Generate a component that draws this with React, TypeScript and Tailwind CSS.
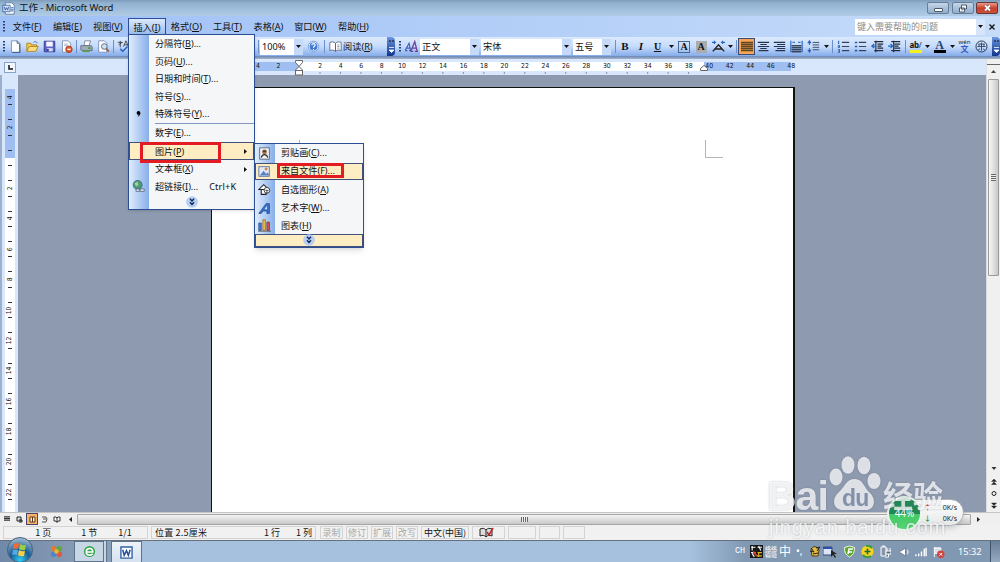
import type { ReactNode } from 'react';

interface MenuEntry {
  label: string;
  hotkey: string;
  tail?: string;
}

const MENUS: MenuEntry[] = [
  { label: '文件', hotkey: 'F' },
  { label: '编辑', hotkey: 'E' },
  { label: '视图', hotkey: 'V' },
  { label: '插入', hotkey: 'I' },
  { label: '格式', hotkey: 'O' },
  { label: '工具', hotkey: 'T' },
  { label: '表格', hotkey: 'A' },
  { label: '窗口', hotkey: 'W' },
  { label: '帮助', hotkey: 'H' },
];

const H_TICKS = Array.from({ length: 19 }, (_, i) => (i + 1) * 2);
const V_TICKS = ['4', '2', '', '2', '4', '6', '8', '10', '12', '14', '16', '18', '20', '22'];

function Label({ label, hotkey, tail = '' }: MenuEntry) {
  return (
    <span className="whitespace-nowrap">
      {label}(<span className="underline underline-offset-1">{hotkey}</span>){tail}
    </span>
  );
}

function Icon({ children, className = '' }: { children: ReactNode; className?: string }) {
  return (
    <svg viewBox="0 0 16 16" className={`h-[13px] w-[13px] shrink-0 ${className}`} fill="none">
      {children}
    </svg>
  );
}

function Tool({ children, w = 'w-[17px]' }: { children?: ReactNode; w?: string }) {
  return <div className={`flex h-full shrink-0 items-center justify-center ${w}`}>{children}</div>;
}

function Arrow({ w = 'w-2' }: { w?: string }) {
  return (
    <Tool w={w}>
      <svg viewBox="0 0 5 3" className="h-[3px] w-[5px]"><path d="M0 0h5L2.5 3z" fill="#111" /></svg>
    </Tool>
  );
}

function Sep({ w = 'w-[3px]' }: { w?: string }) {
  return (
    <Tool w={w}>
      <div className="h-[13px] w-px bg-[#6c8fcb]" />
    </Tool>
  );
}

function Handle({ w }: { w: string }) {
  return (
    <Tool w={w}>
      <svg viewBox="0 0 2 12" className="h-3 w-[2px]">
        <path d="M1 0v12" stroke="#27406f" strokeWidth="2" strokeDasharray="1.5 1.5" />
      </svg>
    </Tool>
  );
}

function Combo({ text, w }: { text: string; w: string }) {
  return (
    <div className={`mr-[2px] flex h-4 shrink-0 items-center bg-white ${w}`}>
      <span className="flex-1 whitespace-nowrap pl-[2px]">{text}</span>
      <div className="flex h-full w-[9px] items-center justify-center bg-[#c5daf8]">
        <Arrow />
      </div>
    </div>
  );
}

function EndCap() {
  return (
    <div className="flex h-[19px] w-2 shrink-0 flex-col items-center justify-between rounded-r-sm bg-linear-to-b from-[#6c96df] to-[#10358a] py-[3px]">
      <svg viewBox="0 0 5 2" className="h-[2px] w-[5px]"><path d="M0 1h2M3 1h2" stroke="#111" /></svg>
      <svg viewBox="0 0 5 6" className="h-[6px] w-[5px]"><path d="M0 .5h5M0 3h5L2.5 5.5z" stroke="#fff" fill="#fff" strokeWidth=".8" /></svg>
    </div>
  );
}

function TitleBar() {
  return (
    <div className="flex h-4 items-start bg-linear-to-b from-[#7f9cb9] via-[#91b2d1] via-20% to-[#b0cbe5]">
      <div className="flex h-[15px] w-[18px] items-center pl-[2px] pt-[1px]">
        <Icon className="h-[12px] w-[12px]">
          <path d="M4 1h8l3 3v11H4z" fill="#fff" stroke="#4d6ea5" />
          <path d="M1 4h9v8H1z" fill="#d6e4f8" stroke="#2f5ba6" />
          <path d="M3 6l1 4 1.5-3L7 10l1-4M11 7h3M11 9h3M11 11h3" stroke="#234a91" />
        </Icon>
      </div>
      <span className="flex-1 pl-[1px] text-[9.500px] leading-[15px] tracking-[-0.07px] text-[#0d1620]">工作 - Microsoft Word</span>
      <div className="mr-[2px] flex gap-[2.500px] pt-[2px]">
        <div className="flex h-[12px] w-[22px] items-center justify-center rounded-[2px] border border-[#667d98] bg-linear-to-b from-[#c5d6e7] to-[#91adca]">
          <div className="mt-[3px] h-[4px] w-[9px] rounded-[1px] border border-[#4a5a6d] bg-white" />
        </div>
        <div className="flex h-[12px] w-[22px] items-center justify-center rounded-[2px] border border-[#667d98] bg-linear-to-b from-[#c5d6e7] to-[#91adca]">
          <svg viewBox="0 0 10 9" className="h-[9px] w-[10px]"><path d="M3.5 1h5v4h-5zM1.500 4h5v4h-5z" fill="#fff" stroke="#4a5a6d" /><path d="M3.500 6h1" stroke="#4a5a6d" /></svg>
        </div>
        <div className="flex h-[12px] w-[22px] items-center justify-center rounded-[2px] border border-[#6d3436] bg-linear-to-b from-[#e59a8c] via-[#c9402c] to-[#c94f38]">
          <svg viewBox="0 0 9 8" className="h-[8px] w-[9px]"><path d="M2 1.500l5 5M7 1.500l-5 5" stroke="#7b3430" strokeWidth="3" /><path d="M2 1.500l5 5M7 1.500l-5 5" stroke="#fff" strokeWidth="1.800" /></svg>
        </div>
      </div>
    </div>
  );
}

function menuWidth(hotkey: string) {
  if (hotkey === 'I') {
    return 'mt-[2px] h-[19px] w-[38px] border border-b-0 border-[#2c4f93] bg-linear-to-b from-[#dbe8fc] to-[#8fb4ec]';
  }
  if (hotkey === 'W' || hotkey === 'H') {
    return 'h-full w-[43px]';
  }
  return 'OTA'.includes(hotkey) ? 'h-full w-[41px]' : 'h-full w-[40.300px]';
}

function MenuBar() {
  return (
    <div className="flex h-[21px] items-center bg-linear-to-r from-[#9fc0f6] to-[#c6dcf9] text-[9.200px] text-[#111]">
      <Handle w="w-[7px]" />
      {MENUS.map((menu) => (
        <div key={menu.hotkey} className={`flex shrink-0 items-center justify-center ${menuWidth(menu.hotkey)}`}>
          <Label {...menu} />
        </div>
      ))}
      <div className="flex-1" />
      <div className="mr-[2px] flex h-[16px] w-[130px] items-center bg-white">
        <span className="flex-1 pl-[2px] text-[9px] text-[#8b8b8b]">键入需要帮助的问题</span>
        <div className="h-full w-[9px] bg-[#d6e5fa]"><Arrow w="w-[9px]" /></div>
      </div>
      <svg viewBox="0 0 6 6" className="ml-[2px] mr-[5px] h-[6px] w-[6px]"><path d="M.5.5l5 5M5.500.5l-5 5" stroke="#111" strokeWidth="1.300" /></svg>
    </div>
  );
}

function StandardTools() {
  return (
    <>
      <Handle w="w-[7px]" />
      <Tool>
        <Icon><path d="M3 1h7l3 3v11H3z" fill="#fff" stroke="#6b86b5" /><path d="M10 1v3h3M13.500 5v10.500H4" stroke="#2c4877" /></Icon>
      </Tool>
      <Tool>
        <Icon><path d="M1 14V4h5l1 2h6v3" fill="#f6c84b" stroke="#a97a17" /><path d="M1 14l3-6h11l-3 6z" fill="#ffdf7c" stroke="#a97a17" /><path d="M9 3c2-2 4-1 5 1" stroke="#3c5d90" /></Icon>
      </Tool>
      <Tool>
        <Icon><path d="M1.500 1.500h13v13h-13z" fill="#5b62c9" stroke="#2b2f87" /><path d="M4 2h8v6H4z" fill="#f4f6ff" /><path d="M5 10h7v4H5z" fill="#d4d8f3" /><path d="M6 11v3" stroke="#2b2f87" strokeWidth="2" /></Icon>
      </Tool>
      <Tool>
        <Icon><path d="M3 1h7l3 3v11H3z" fill="#fff" stroke="#7588ab" /><path d="M5 5h5M5 7h5" stroke="#9aa8c4" /><circle cx="11" cy="11.500" r="4" fill="#e2582f" stroke="#a23a18" /><path d="M9 11.500h4" stroke="#fff" strokeWidth="1.600" /></Icon>
      </Tool>
      <Sep />
      <Tool>
        <Icon><path d="M5 7l1-6h7l-2 6z" fill="#fff" stroke="#6c7b8f" /><path d="M1 7h13l1 2v4H2l-1-1z" fill="#a3adb9" stroke="#566577" /><path d="M3 13h9v2H3z" fill="#5aa54a" /><path d="M10 10h3" stroke="#3da03a" strokeWidth="2" /></Icon>
      </Tool>
      <Tool>
        <Icon><path d="M2 1h7l3 3v11H2z" fill="#fff" stroke="#6b86b5" /><circle cx="9" cy="8" r="3.500" fill="#cfe0f3" stroke="#4b5a70" /><path d="M11.500 10.500l3 4" stroke="#a15e29" strokeWidth="2" /></Icon>
      </Tool>
      <Sep />
      <Tool>
        <Icon><path d="M1 3h6M4 1v2M2 6l4-3M4 4v5M8 8l3-7 3 7M9 6h4" stroke="#333" /><path d="M4 11l3 3 6-6" stroke="#2e69c8" strokeWidth="2" /></Icon>
      </Tool>
      <div className="w-[124px] shrink-0" />
      <Sep w="w-[4px]" />
      <Combo text="100%" w="w-[43px]" />
      <Tool>
        <Icon>
          <circle cx="8" cy="8" r="6.500" fill="#e4efff" stroke="#6993d6" />
          <circle cx="8" cy="8" r="4.800" fill="#3f79d0" />
          <path d="M6 6.500c0-3 4.500-2.500 4 0C9.500 8 8 7.500 8 9.500M8 11v1.300" stroke="#fff" strokeWidth="1.400" />
        </Icon>
      </Tool>
      <Sep w="w-[5px]" />
      <Tool w="w-[16px]">
        <Icon className="h-[11px] w-[11px]"><path d="M8 4C6 2 3 2 1 3v10c2-1 5-1 7 1zM8 4c2-2 5-2 7-1v10c-2-1-5-1-7 1z" fill="#fff" stroke="#53617a" /><path d="M10 6h3M10 8h3M10 10h3" stroke="#8994a7" /></Icon>
      </Tool>
      <div className="w-[44px] shrink-0"><Label label="阅读" hotkey="R" /></div>
      <EndCap />
    </>
  );
}

function Lines({ d }: { d: string }) {
  return <Icon><path d={d} stroke="#26334d" strokeWidth="1.400" /></Icon>;
}

function FormatTools() {
  return (
    <>
      <Handle w="ml-[2px] w-[6px]" />
      <Tool w="w-[17px]">
        <Icon><path d="M0 13l5-9 2 9M2 10h5M0 13h3M5 13h3" stroke="#3b5fae" strokeWidth="1.400" /><path d="M7 14l5-12 3 12M9 10h5M7 14h3M12 14h4" stroke="#71409c" strokeWidth="1.600" /></Icon>
      </Tool>
      <Combo text="正文" w="w-[59px]" />
      <Combo text="宋体" w="w-[90px]" />
      <Combo text="五号" w="w-[38px]" />
      <Sep w="w-[4px]" />
      <Tool w="w-[16px]"><b className="font-['Liberation_Serif',serif] text-[11px] font-black">B</b></Tool>
      <Tool w="w-[16px]"><b className="font-['Liberation_Serif',serif] text-[11px] italic">I</b></Tool>
      <Tool><b className="font-['Liberation_Serif',serif] text-[10px] underline">U</b></Tool>
      <Arrow w="w-[10px]" />
      <Tool w="w-[16px]">
        <div className="flex h-[12px] w-[12px] items-center justify-center border border-[#496793] font-['Liberation_Serif',serif] text-[10px] font-bold">A</div>
      </Tool>
      <Tool w="w-[18px]">
        <div className="flex h-[12px] w-[11px] items-center justify-center bg-[#aaacaf] font-['Liberation_Serif',serif] text-[10px] font-bold">A</div>
      </Tool>
      <Tool w="w-[16px]">
        <Icon><path d="M1 14l7-8 7 8M4 11h8" stroke="#222" strokeWidth="1.800" /><path d="M0 3h5M3 1v4M11 3h5M13 1v4" stroke="#2967bd" strokeWidth="1.400" /></Icon>
      </Tool>
      <Arrow />
      <Sep w="w-[4px]" />
      <div className="flex h-[17px] w-[17px] shrink-0 items-center justify-center border border-[#3d4b74] bg-[#f5a554]">
        <svg viewBox="0 0 12 12" className="h-[12px] w-[12px]"><path d="M0 1.500h12M0 3.500h12M0 5.500h12M0 7.500h12M0 9.500h12" stroke="#5f4520" strokeWidth="1.400" /></svg>
      </div>
      <Tool w="w-[16px]"><Lines d="M1 3h14M4 5.500h8M1 8h14M4 10.500h8M2 13h12" /></Tool>
      <Tool><Lines d="M1 3h14M5 5.500h10M1 8h14M5 10.500h10M3 13h12" /></Tool>
      <Tool>
        <Icon><path d="M1 1v14M15 1v14M3 3h3M10 3h3" stroke="#3973c9" strokeWidth="1.600" /><path d="M2 7h12M2 9.500h12M2 12h12M2 14.500h12" stroke="#36445f" strokeWidth="1.800" /></Icon>
      </Tool>
      <Tool w="w-[17px]">
        <Icon><path d="M3 2v4M3 10v4M1 4l2-3 2 3M1 12l2 3 2-3" stroke="#2b62b7" strokeWidth="1.300" /><path d="M7 3h8M7 6h8M7 9h8M7 12h8" stroke="#26334d" /></Icon>
      </Tool>
      <Arrow />
      <Sep w="w-[5px]" />
      <Tool>
        <Icon><path d="M2 1v4M1 7h2v2H1M1 12h2v3H1" stroke="#275dac" strokeWidth="1.300" /><path d="M6 3h9M6 8h9M6 13h9" stroke="#37435a" strokeWidth="1.400" /></Icon>
      </Tool>
      <Tool>
        <Icon><path d="M1 3h3M1 8h3M1 13h3" stroke="#275dac" strokeWidth="2" /><path d="M6 3h9M6 8h9M6 13h9" stroke="#37435a" strokeWidth="1.400" /></Icon>
      </Tool>
      <Tool>
        <Icon><path d="M4 2h11M8 5h7M8 7.500h5M8 10h7M4 13h11M6 1v14" stroke="#222b3e" strokeWidth="1.400" /><path d="M6 7.500H1M4 5L1 7.500 4 10" stroke="#2868c7" strokeWidth="1.600" /></Icon>
      </Tool>
      <Tool>
        <Icon><path d="M4 2h11M8 5h7M8 7.500h5M8 10h7M4 13h11M7 1v14" stroke="#222b3e" strokeWidth="1.400" /><path d="M0 7.500h5M3 5l3 2.500L3 10" stroke="#2868c7" strokeWidth="1.600" /></Icon>
      </Tool>
      <Sep w="w-[4px]" />
      <Tool>
        <div className="flex h-[13px] w-[12px] flex-col border-b-[3px] border-[#f6f01e]">
          <span className="text-[8px] font-bold leading-[9px] tracking-tighter">ab<span className="text-[#5d6f89]">/</span></span>
        </div>
      </Tool>
      <Arrow w="w-[7px]" />
      <Tool>
        <div className="flex h-[13px] w-[12px] justify-center border-b-[3px] border-black font-['Liberation_Serif',serif] text-[12px] font-bold leading-[10px] text-[#263e73]">A</div>
      </Tool>
      <Arrow />
      <Tool>
        <div className="flex flex-col items-center">
          <span className="text-[6px] leading-[5px] text-[#222]">wén</span>
          <span className="text-[8px] font-bold leading-[8px] text-[#3558bd]">文</span>
        </div>
      </Tool>
      <Tool>
        <Icon><circle cx="8" cy="8" r="6.800" stroke="#263550" strokeWidth="1.200" /><path d="M4 5h8M3 8h10M8 3v10M6 11l-2 1M10 11l2 1M5 5v3M11 5v3" stroke="#263550" /></Icon>
      </Tool>
      <div className="flex-1" />
      <EndCap />
    </>
  );
}

function Ruler() {
  return (
    <div className="flex h-[16px] items-center bg-[#d8e7fc] font-['DejaVu_Sans_Condensed','DejaVu_Sans',sans-serif] text-[6.800px] leading-none text-[#111]">
      <div className="ml-[4px] mt-px flex h-[11px] w-[12px] items-center justify-center border border-[#89a2c8] bg-[#eef5ff]">
        <svg viewBox="0 0 5 5" className="h-[5px] w-[5px]"><path d="M1 0v4h4" stroke="#111" fill="none" strokeWidth="1.500" /></svg>
      </div>
      <div className="ml-[195px] mb-px flex h-[9px] w-[88px] items-center bg-[#9fbff3]">
        <span className="ml-[37px] w-[20px] text-center">4</span>
        <span className="w-[21px] text-center">2</span>
      </div>
      <div className="mb-px flex h-[9px] w-[405px] items-center bg-white pl-[11px]">
        {H_TICKS.map((n) => (
          <span key={n} className="w-[20.480px] shrink-0 text-center">{n}</span>
        ))}
      </div>
      <div className="mb-px flex h-[9px] w-[87px] items-center bg-[#9fbff3]">
        {[40, 42, 44, 46, 48].map((n) => (
          <span key={n} className="-ml-[5px] mr-[5px] w-[20.500px] shrink-0 text-center">{n}</span>
        ))}
      </div>
      <div className="flex-1" />
      <div className="flex h-full w-[14px] flex-col items-center border-l border-[#ddd] bg-[#f0f0f0]">
        <div className="h-[6px] w-full border-b border-[#666]" />
        <svg viewBox="0 0 5 3" className="mt-[5px] h-[3px] w-[5px]"><path d="M0 3h5L2.500 0z" fill="#444" /></svg>
      </div>
    </div>
  );
}

function VerticalRuler() {
  return (
    <div className="w-[18px] shrink-0 overflow-hidden border-l-2 border-[#9bb0cd] bg-[#d8e7fc] pl-[3px]">
      <div className="h-full w-[10px] bg-[linear-gradient(#d8e7fc_14px,#9fbff3_14px,#9fbff3_83px,#fff_83px)] pt-[7px] font-['DejaVu_Sans_Condensed','DejaVu_Sans',sans-serif] text-[6.800px] leading-none text-[#111]">
        {V_TICKS.map((n, i) => (
          <div key={i} className="flex h-[30.400px] flex-col items-center justify-between py-[7px]">
            <div className={i === 0 ? 'h-px w-[4px]' : 'h-px w-[4px] bg-[#333]'} />
            <span className="-rotate-90">{n}</span>
            <div className="h-px w-[4px] bg-[#333]" />
          </div>
        ))}
      </div>
    </div>
  );
}

function RulerMarks() {
  return (
    <>
      <svg viewBox="0 0 8 16" className="absolute left-[295px] top-[60px] h-[16px] w-[8px]">
        <path d="M.5.500h7v2L4 6.500.5 2.500zM4 6.500l3.500 3.500v5H.5v-5zM.5 10.500h7" fill="#fff" stroke="#666" />
      </svg>
      <svg viewBox="0 0 8 6" className="absolute left-[700px] top-[65px] h-[6px] w-[8px]"><path d="M.5 5.500v-2L4 .5l3.500 3v2z" fill="#fff" stroke="#666" /></svg>
      <svg viewBox="0 0 410 2" className="absolute left-[299px] top-[72px] h-[2px] w-[410px]">
        <path d="M20.500 1H400" stroke="#8391a8" strokeWidth="2" strokeDasharray="1 19.480" />
      </svg>
    </>
  );
}

function Document() {
  return (
    <div className="flex min-h-0 flex-1">
      <VerticalRuler />
      <div className="flex flex-1 bg-[#8e9aaf] pl-[193px] pt-[12px]">
        <div className="w-[584px] border-l border-t border-r-2 border-[#111] bg-white pl-[493px] pt-[52px]">
          <div className="h-[18px] w-[18px] border-b border-l border-[#b5b5b5]" />
        </div>
      </div>
      <div className="flex w-[14px] flex-col items-center justify-between border-l border-[#ddd] bg-[#f0f0f0] pt-[4px]">
        <div className="flex h-[197px] w-[11px] shrink-0 items-center justify-center rounded-[1px] border border-[#999] bg-linear-to-r from-[#f7f7f7] to-[#c8c8ca]">
          <div className="h-[7px] w-[5px] bg-[repeating-linear-gradient(#666_0_1px,#eee_1px_2px)]" />
        </div>
        <svg viewBox="0 0 8 48" className="h-[48px] w-[8px]">
          <path d="M1.500 3h5L4 6z" fill="#333" />
          <path d="M1.500 17.500h5L4 15zM1.500 20.500h5L4 18zM1.500 39h5L4 41.500zM1.500 42h5L4 44.500z" fill="#222" stroke="#222" strokeWidth=".4" />
          <circle cx="4" cy="29.500" r="2" fill="none" stroke="#222" />
        </svg>
      </div>
    </div>
  );
}

function HScroll() {
  return (
    <div className="flex h-[13px] items-center border-t border-[#c4c4c4] bg-[#efefef]">
      <Tool w="ml-[1px] w-[12px]"><svg viewBox="0 0 7 7" className="h-[6px] w-[6px]"><path d="M0 1h7M0 3h7M0 5h7" stroke="#333" strokeWidth="1.300" /></svg></Tool>
      <Tool w="w-[13px]"><svg viewBox="0 0 7 7" className="h-[7px] w-[7px]"><path d="M1 1h4v4H1zM3 4h3v2H3" stroke="#222" fill="#ddd" /></svg></Tool>
      <div className="flex h-[12px] w-[12px] items-center justify-center border border-[#4a416f] bg-[#f7b467]">
        <svg viewBox="0 0 7 7" className="h-[7px] w-[7px]"><path d="M1 1h5v5H1zM3.500 1v5" stroke="#553817" fill="#fff2d8" /></svg>
      </div>
      <Tool w="w-[13px]"><svg viewBox="0 0 7 7" className="h-[7px] w-[7px]"><path d="M1 1h4l1 2-1 3H1M2 3h3" stroke="#555" fill="none" /></svg></Tool>
      <Tool w="w-[12px]"><svg viewBox="0 0 8 7" className="h-[7px] w-[8px]"><path d="M1 1h2l1 1 1-1h2v4H5L4 6.500 3 5H1zM4 2v4" stroke="#333" fill="#fff" /></svg></Tool>
      <Tool w="w-[14px]"><svg viewBox="0 0 3 5" className="h-[5px] w-[3px]"><path d="M3 0v5L0 2.500z" fill="#222" /></svg></Tool>
      <div className="flex h-[11px] w-[894px] items-center justify-center rounded-[1px] border border-[#a5a5a5] bg-linear-to-b from-[#f5f5f5] to-[#c8c8c8]">
        <div className="h-[5px] w-[7px] bg-[repeating-linear-gradient(90deg,#666_0_1px,#eee_1px_2px)]" />
      </div>
      <Tool w="w-[14px]"><svg viewBox="0 0 3 5" className="h-[5px] w-[3px]"><path d="M0 0v5L3 2.500z" fill="#222" /></svg></Tool>
    </div>
  );
}

const CELL = 'flex h-[13px] shrink-0 items-center justify-center whitespace-nowrap border border-[#d3d3d3]';

function StatusBar() {
  return (
    <div className="flex h-[16px] items-center border-b border-[#666f7c] bg-[#f1f1f1] pl-[3px] font-['Noto_Sans_CJK_SC',sans-serif] text-[9px] text-[#111]">
      <div className={`${CELL} mr-[3px] w-[145px]`}>
        <span className="ml-[16px] w-[46px]">1 页</span>
        <span className="w-[37px]">1 节</span>
        <span>1/1</span>
      </div>
      <div className={`${CELL} mr-[4px] w-[165px]`}>
        <span className="w-[109px] tracking-[0.200px]">位置 2.5厘米</span>
        <span className="w-[32px]">1 行</span>
        <span>1 列</span>
      </div>
      <div className={`${CELL} mr-[3px] w-[23px] text-[#aaa]`}>录制</div>
      <div className={`${CELL} mr-[3px] w-[22px] text-[#aaa]`}>修订</div>
      <div className={`${CELL} mr-[3px] w-[22px] text-[#aaa]`}>扩展</div>
      <div className={`${CELL} mr-[3px] w-[22px] text-[#aaa]`}>改写</div>
      <div className={`${CELL} mr-[3px] w-[48px]`}>中文(中国)</div>
      <div className={`${CELL} mr-[3px] w-[33px]`}>
        <svg viewBox="0 0 15 11" className="mr-[4px] h-[11px] w-[15px]">
          <path d="M1 2c3-1 4-1 6 1 2-2 3-2 6-1v7c-3-1-4-1-6 1-2-2-3-2-6-1zM7 3v7" fill="#ddd" stroke="#222" />
          <path d="M8 5l2 3 4-7" stroke="#bd2828" strokeWidth="1.600" fill="none" />
        </svg>
      </div>
      <div className={`${CELL} mr-[3px] w-[28px]`} />
      <div className={`${CELL} mr-[3px] w-[21px]`} />
      <div className={`${CELL} w-[22px]`} />
    </div>
  );
}

function Taskbar() {
  return (
    <div className="flex h-[21px] items-center bg-[linear-gradient(90deg,#7189a8_0,#8499b3_70px,#8ca6c1_141px,#a5c1dd_142px,#a5c1dd_690px,#8198b3_745px,#8198b3_100%)] text-white">
      <div className="relative h-[21px] w-[38px]">
        <svg viewBox="0 0 28 26" className="absolute -top-[5px] left-[6px] h-[26px] w-[28px]">
          <defs>
            <radialGradient id="orb" cx=".5" cy=".9" r=".9">
              <stop offset="0" stopColor="#31cbf4" /><stop offset=".45" stopColor="#165d92" /><stop offset="1" stopColor="#a7bfd2" />
            </radialGradient>
          </defs>
          <circle cx="14" cy="14" r="12.500" fill="url(#orb)" stroke="#46617f" />
          <path d="M8 8q3-2 5 0l-1 5q-2-1-5 0z" fill="#ef6a33" />
          <path d="M14 8q3 2 6 1l-1 5q-3 1-6-1z" fill="#9ccd45" />
          <path d="M7 14q3-1 5 0l-1 5q-2-1-5 0z" fill="#56a9e8" />
          <path d="M13 14q3 2 6 1l-1 5q-3 1-6-1z" fill="#f8cf43" />
        </svg>
      </div>
      <div className="flex w-[36px] items-center justify-center">
        <svg viewBox="0 0 14 14" className="h-[13px] w-[13px]">
          <circle cx="4" cy="4" r="3" fill="#e07932" /><circle cx="10" cy="4" r="3" fill="#62a83a" /><circle cx="4" cy="10" r="3" fill="#4a86cb" /><circle cx="10" cy="10" r="3" fill="#dc5a45" /><circle cx="7" cy="7" r="2.400" fill="#e5bb35" />
        </svg>
      </div>
      <div className="flex h-[21px] w-[30px] items-center justify-center border border-[#60738a] bg-[#c7d6e4]">
        <svg viewBox="0 0 14 14" className="h-[13px] w-[13px]">
          <circle cx="7" cy="7" r="6" fill="#35a84c" /><path d="M3.500 7.500h7c0-5-7-5-7 0 0 4 5 4 7 2" fill="none" stroke="#fff" strokeWidth="1.800" />
        </svg>
      </div>
      <div className="mr-[4px] h-[21px] w-[3px] border-r border-[#60738a] bg-[#c7d6e4]" />
      <div className="flex h-[21px] w-[31px] items-center justify-center border border-b-0 border-[#60738a] bg-linear-to-b from-[#edf3f9] to-[#d6e2f0]">
        <svg viewBox="0 0 14 14" className="h-[13px] w-[13px]"><path d="M1 1h12v12H1z" fill="#fff" stroke="#3561a3" strokeWidth="1.500" /><path d="M3 4l1.500 6L7 5l2 5 2-6" fill="none" stroke="#244f99" strokeWidth="1.600" /></svg>
      </div>
      <div className="flex-1" />
      <span className="w-[15px] font-['Liberation_Mono',monospace] text-[8.500px]">CH</span>
      <svg viewBox="0 0 12 12" className="h-[13px] w-[13px]"><path d="M0 0h12v12H0z" fill="#171717" /><path d="M1 2h4M2 1v4M7 2h4M8 1l2 4M1 7h4M2 8l2 3" stroke="#fff" /><path d="M7 7h4M8 7v4M6 10h5" stroke="#e4b422" /><path d="M3 6l3 4" stroke="#dd4035" strokeWidth="1.500" /></svg>
      <span className="ml-[2px] flex w-[14px] flex-col text-[6px] leading-[6px]"><span>络络</span><span>输验</span></span>
      <span className="w-[17px] text-[12px] leading-none">中</span>
      <span className="w-[13px] text-[10px]">•,</span>
      <svg viewBox="0 0 12 12" className="mr-[2px] h-[12px] w-[12px]"><path d="M2 4c2-5 6-4 8 0l-1 6H3z" fill="#e2bc3f" stroke="#563d1c" /><path d="M1 5l4 1-3-4M7 2l4-1-3 4M4 8l5-1" stroke="#222" fill="none" /></svg>
      <svg viewBox="0 0 14 12" className="mr-[6px] h-[12px] w-[14px]"><path d="M0 1h9v8H0z" fill="#dae5f5" stroke="#344c78" /><path d="M0 2h9" stroke="#2c4db1" strokeWidth="2" /><path d="M8 4v7l2-2 2 3 1-1-2-3h3z" fill="#222" /></svg>
      <svg viewBox="0 0 13 13" className="mr-[5px] h-[13px] w-[13px]"><path d="M6.500 1l5 1.500c0 5-1 7-5 9.500-4-2.500-5-4.500-5-9.500z" fill="#59a72e" stroke="#f2f7dd" /><path d="M5 9l1-5h4M5 7h4" stroke="#fff" strokeWidth="1.500" fill="none" /></svg>
      <svg viewBox="0 0 13 13" className="mr-[5px] h-[13px] w-[13px]"><circle cx="6.500" cy="6.500" r="6" fill="#f6d420" /><path d="M2 10a6 6 0 008 1M11 3a6 6 0 00-6-2" stroke="#3a9c36" strokeWidth="2" fill="none" /><path d="M3.500 6.500h6M6.500 3.500v6" stroke="#1c6c34" strokeWidth="1.600" /></svg>
      <svg viewBox="0 0 12 13" className="mr-[8px] h-[13px] w-[12px]"><path d="M2 2h5v9H2zM3 1h3" stroke="#fff" fill="#8796a7" /><path d="M8 3v3M11 3v3M7 6h5v3H7zM9.500 9v3H6" stroke="#fff" fill="#566b84" /></svg>
      <svg viewBox="0 0 13 13" className="mr-[4px] h-[12px] w-[12px]"><path d="M1 5h2l4-3v9L3 8H1z" fill="#fff" stroke="#4d5e71" strokeWidth=".7" /><path d="M9 4q2 2.500 0 5" stroke="#fff" fill="none" /></svg>
      <svg viewBox="0 0 13 13" className="mr-[5px] h-[12px] w-[12px]"><path d="M1 11V9M4 11V8M7 11V6M10 11V3M12 11V2" stroke="#fff" strokeWidth="1.500" /></svg>
      <svg viewBox="0 0 13 13" className="mr-[13px] h-[12px] w-[13px]"><path d="M2 1v11M2 2h7v6H2" stroke="#fff" fill="#d8e0ea" /><circle cx="9" cy="9" r="4" fill="#d4423c" /><path d="M7.500 7.500l3 3M10.500 7.500l-3 3" stroke="#fff" /></svg>
      <span className="w-[32px] text-[9.200px]">15:32</span>
      <div className="h-full w-[10px] border-l border-[#40546c] bg-linear-to-b from-[#697f98] to-[#96aac0]" />
    </div>
  );
}

function MoreButton() {
  return (
    <svg viewBox="0 0 12 12" className="h-[12px] w-[12px]"><circle cx="6" cy="6" r="5.800" fill="#b3cdf5" /><path d="M4 2.800L6 5l2-2.200M4 6.300l2 2.200 2-2.200" stroke="#10234e" strokeWidth="1.300" fill="none" /></svg>
  );
}

function MenuRow({ children, icon, arrow, active, h = 'h-[17.600px]' }: { children: ReactNode; icon?: ReactNode; arrow?: boolean; active?: boolean; h?: string }) {
  return (
    <div className={`flex shrink-0 items-center ${h} ${active ? 'border border-[#41517b] bg-[#feecc2]' : 'border-x border-transparent'}`}>
      <div className="flex w-[17px] items-center justify-center">{icon}</div>
      <span className="ml-[8px] flex-1 whitespace-nowrap">{children}</span>
      {arrow && <svg viewBox="0 0 3 5" className="mr-[6px] h-[5px] w-[3px]"><path d="M0 0v5L3 2.500z" fill="#111" /></svg>}
    </div>
  );
}

function InsertMenu() {
  return (
    <div className="absolute left-[128px] top-[34px] flex h-[176px] w-[127px] flex-col border border-[#2c4f93] bg-[linear-gradient(90deg,#e0edfe_0,#87aee9_20px,#f5f6f8_20px)] text-[9.100px] text-[#111] shadow-sm">
      <MenuRow><Label label="分隔符" hotkey="B" tail="..." /></MenuRow>
      <MenuRow><Label label="页码" hotkey="U" tail="..." /></MenuRow>
      <MenuRow><Label label="日期和时间" hotkey="T" tail="..." /></MenuRow>
      <MenuRow><Label label="符号" hotkey="S" tail="..." /></MenuRow>
      <MenuRow icon={<svg viewBox="0 0 5 7" className="h-[6px] w-[5px]"><circle cx="2.500" cy="2.300" r="2.200" /><path d="M4.500 2q.5 3-3 4.800l1.500-3" /></svg>}>
        <Label label="特殊符号" hotkey="Y" tail="..." />
      </MenuRow>
      <div className="ml-[26px] h-px shrink-0 bg-[#8297bd]" />
      <MenuRow h="h-[18.500px]"><Label label="数字" hotkey="E" tail="..." /></MenuRow>
      <MenuRow active arrow h="h-[18px]"><Label label="图片" hotkey="P" /></MenuRow>
      <MenuRow arrow><Label label="文本框" hotkey="X" /></MenuRow>
      <MenuRow
        icon={<Icon className="h-[13px] w-[13px]"><circle cx="7" cy="6" r="5.500" fill="#4c9b72" stroke="#3a6686" /><path d="M3 4l4-2 1 4-3 2zM10 3l2 3" fill="#9fd1a0" /><path d="M5 11h4v3H5zM10 11h5v3h-5z" stroke="#52637d" fill="#eaf1f9" /></Icon>}
      >
        <Label label="超链接" hotkey="I" tail="..." />
        <span className="ml-[11px] tracking-[0.200px]">Ctrl+K</span>
      </MenuRow>
      <div className="flex min-h-0 flex-1 items-center justify-center pb-[1px]"><MoreButton /></div>
      <div className="absolute left-[11px] top-[107px] h-[21px] w-[81px] border-[3px] border-[#e31c23]" />
    </div>
  );
}

function PictureMenu() {
  return (
    <div className="absolute left-[254px] top-[143px] flex h-[105px] w-[110px] flex-col border border-[#2c4f93] bg-[linear-gradient(90deg,#e0edfe_0,#87aee9_20px,#f5f6f8_20px)] text-[9.100px] text-[#111] shadow-md">
      <MenuRow h="h-[18.500px]" icon={<Icon><path d="M2 1h12v14H2z" fill="#eef1f5" stroke="#4e5a70" /><circle cx="8" cy="6" r="3" fill="#a4704a" /><path d="M4 13c1-5 7-5 8 0M6 5h4" stroke="#333" strokeWidth="1.500" /></Icon>}>
        <Label label="剪贴画" hotkey="C" tail="..." />
      </MenuRow>
      <MenuRow active h="h-[17px]" icon={<Icon><path d="M1 2h13v12H1z" fill="#dce9f8" stroke="#4e6a99" /><path d="M2 13l5-6 3 4 2-2 2 4z" fill="#5b82bb" /><circle cx="10" cy="5" r="1.800" fill="#d9813a" /></Icon>}>
        <Label label="来自文件" hotkey="F" tail="..." />
      </MenuRow>
      <MenuRow h="h-[20px]" icon={<Icon><path d="M4 8v6h6V8" fill="#fff" stroke="#222" strokeWidth="1.300" /><path d="M1 8l6-6 6 6H1z" fill="#fff" stroke="#222" strokeWidth="1.300" /><circle cx="11" cy="9" r="3.500" fill="#fff" stroke="#222" /><path d="M9 9h4M11 9v4" stroke="#222" /></Icon>}>
        <Label label="自选图形" hotkey="A" />
      </MenuRow>
      <MenuRow icon={<Icon><path d="M1 14L10 2h4v12h-3v-3H6l-2 3z" fill="#3971ca" stroke="#234c94" /><path d="M8 9h3V5z" fill="#d9e9ff" /></Icon>}>
        <Label label="艺术字" hotkey="W" tail="..." />
      </MenuRow>
      <MenuRow h="h-[16.500px]" icon={<Icon><path d="M1 5h3v9H1z" fill="#4b7dd0" stroke="#294d91" /><path d="M6 1h3v13H6z" fill="#f0c94b" stroke="#9b651e" /><path d="M11 4h3v10h-3z" fill="#d4574b" stroke="#883029" /><path d="M0 15h16" stroke="#555" /></Icon>}>
        <Label label="图表" hotkey="H" />
      </MenuRow>
      <div className="flex min-h-0 flex-1 items-center justify-center border border-[#41517b] bg-[#feecc2]"><MoreButton /></div>
      <div className="absolute left-[22px] top-[19px] h-[15px] w-[67px] border-[3px] border-[#e31c23]" />
    </div>
  );
}

function SpeedWidget() {
  return (
    <div className="absolute left-[892px] top-[499px] flex h-[27px] w-[72px] items-center rounded-full border border-[#adb2b6] bg-linear-to-b from-white to-[#e7e8e8] pl-[29px] shadow-md">
      <div className="absolute -left-[6px] -top-[4px] flex h-[35px] w-[35px] items-center justify-center rounded-full border-2 border-[#eaf5ea] bg-[linear-gradient(#218657_0,#1f8a54_52%,#43ca67_52%,#55d374_100%)] text-[10px] text-white">
        44%
      </div>
      <div className="flex flex-1 flex-col text-[7px] leading-[11px] text-[#222]">
        <div className="flex justify-between pl-[2px] pr-[6px]"><span className="font-bold text-[#d9423e]">↑</span><span>0K/s</span></div>
        <div className="flex justify-between pl-[2px] pr-[6px]"><span className="font-bold text-[#249c50]">↓</span><span>0K/s</span></div>
      </div>
    </div>
  );
}

function Watermark() {
  return (
    <div className="absolute left-[767px] top-[454px] h-[86px] w-[180px] font-['Liberation_Sans','Noto_Sans_CJK_SC',sans-serif] text-white/75 [filter:drop-shadow(0_0_1px_rgba(90,100,115,0.5))]">
      <span className="absolute left-0 top-[18px] text-[41px] font-bold leading-[48px] tracking-[-1px]">Bai</span>
      <svg viewBox="0 0 54 58" className="absolute left-[61px] top-0 h-[58px] w-[54px]" fill="#fff" fillOpacity=".75">
        <ellipse cx="8" cy="23" rx="6.500" ry="8.500" /><ellipse cx="20" cy="11" rx="6.500" ry="8.800" />
        <ellipse cx="36" cy="11.500" rx="6.500" ry="8.800" /><ellipse cx="46" cy="27" rx="6.500" ry="8" />
        <path d="M27 25c8 0 9 9 15 14 7 7 4 17-4 17H15c-9 0-12-10-5-17 7-6 8-14 17-14z" />
      </svg>
      <span className="absolute left-[75px] top-[31px] text-[23px] font-bold leading-[26px] tracking-[-0.800px] text-[#8290aa]">du</span>
      <span className="absolute left-[116px] top-[28px] whitespace-nowrap text-[30px] font-bold leading-[30px]">经验</span>
      <span className="absolute left-[2px] top-[62px] whitespace-nowrap text-[20px] leading-[22px] tracking-[0.950px]">jingyan.baidu.com</span>
    </div>
  );
}

export default function App() {
  return (
    <div className="relative flex h-[562px] w-[1000px] flex-col overflow-hidden font-['Noto_Sans','Noto_Sans_CJK_SC',sans-serif]">
      <TitleBar />
      <MenuBar />
      <div className="flex h-[19px] items-center bg-linear-to-b from-[#dceafd] via-[#c5dbfb] to-[#86acea] text-[9.200px] text-[#111]">
        <StandardTools />
        <FormatTools />
      </div>
      <div className="h-[3px] bg-linear-to-b from-[#6886b8] to-[#a6b3c7]" />
      <Ruler />
      <Document />
      <HScroll />
      <StatusBar />
      <Taskbar />
      <RulerMarks />
      <InsertMenu />
      <PictureMenu />
      <div className="absolute left-[299px] top-[140px] h-[3px] w-px bg-[#b5b5b5]" />
      <SpeedWidget />
      <Watermark />
    </div>
  );
}
